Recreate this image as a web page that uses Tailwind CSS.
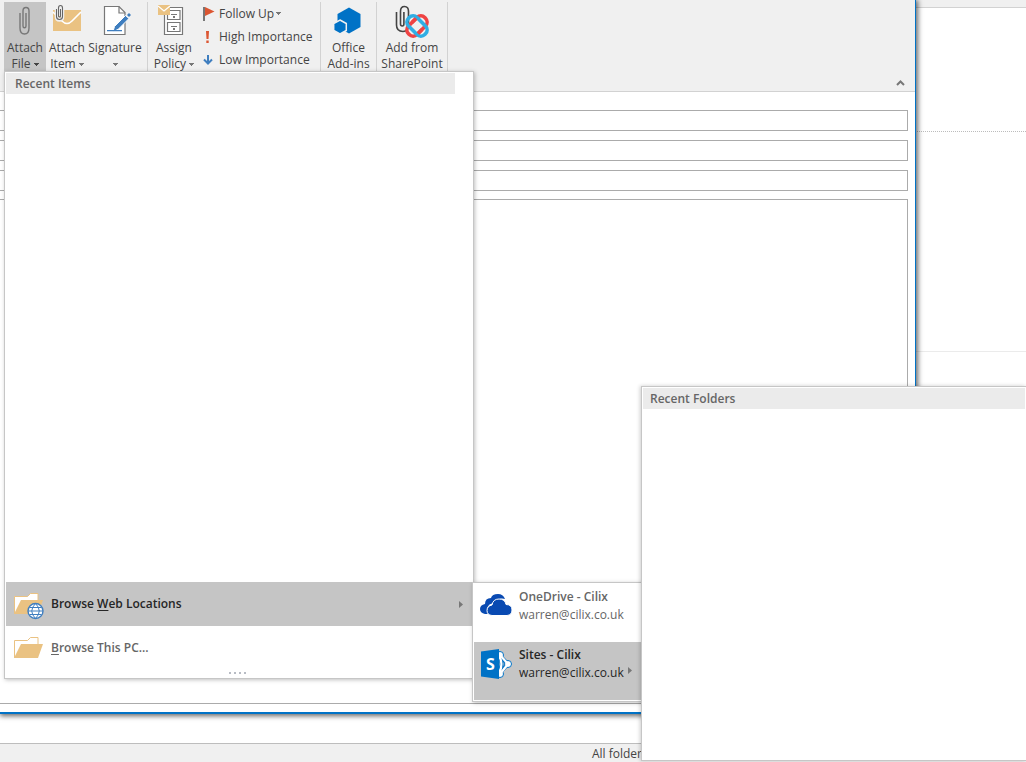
<!DOCTYPE html>
<html lang="en">
<head>
    <meta charset="UTF-8">
    <meta name="viewport" content="width=device-width, initial-scale=1.0">
    <title>Untitled - Message</title>
    <!-- Tailwind CSS CDN -->
    <script src="https://cdn.jsdelivr.net/npm/@tailwindcss/browser@4"></script>
</head>
<body class="relative h-screen overflow-hidden bg-white font-['Open_Sans',sans-serif] text-xs text-[#444444]">
    <!-- Mailbox window behind the message -->
    <div class="flex h-full flex-col">
        <div class="h-2 border-b border-[#d2d2d2] bg-[#f0f0f0]"></div>
        <div class="h-31 border-b border-dotted border-[#bcbcbc]"></div>
        <div class="h-55 border-b border-[#ebebeb]"></div>
        <div class="grow"></div>
        <footer class="flex h-[19px] items-center justify-end border-t border-[#bdbdbd] bg-[#f0f0f0] pt-0.5 pr-96">
            <span>All folder</span>
        </footer>
    </div>

    <!-- Message window -->
    <main class="absolute top-0 right-[110px] bottom-12 left-0 flex flex-col border-r border-b-2 border-[#0072c6] bg-white shadow-[1px_1px_5px_1px_rgba(0,0,0,0.6)]">
        <!-- Ribbon -->
        <div class="flex h-[92px] shrink-0 justify-between border-b border-[#d2d2d2] bg-[#f0f0f0] leading-4">
            <div class="flex h-[72px] pt-0.5 pl-1">
                <button type="button" aria-haspopup="menu" aria-expanded="true" class="flex w-[42px] flex-col items-center bg-[#c5c5c5]">
                    <svg class="h-[38px] w-8" viewBox="0 0 32 38" fill="none" stroke="#777777" stroke-width="1.4">
                        <path d="M11 11v15q0 6 4.500 6t4.500-6V9q0-3.500-3-3.500t-3 3.500v15q0 1.800 1.500 1.800t1.500-1.800V11"/>
                    </svg>
                    <span>Attach</span>
                    <span class="flex items-center gap-[3px]">File
                        <svg class="h-[3px] w-[5px]" viewBox="0 0 5 3" fill="#444444"><path d="M0 0h5v1H4v1H3v1H2V2H1V1H0z"/></svg>
                    </span>
                </button>
                <button type="button" class="flex w-[42px] flex-col items-center">
                    <svg class="h-[38px] w-8" viewBox="0 0 32 38" fill="none">
                        <path fill="#eac282" d="M2 8h28v21H2z"/>
                        <path stroke="#ffffff" stroke-width="1.600" d="M2 10l9 9q5 5 10 0l9-9"/>
                        <path stroke="#f0f0f0" stroke-width="3.500" d="M5.500 8v7q0 3 3 3t3-3V7q0-3-2-3t-2 3v7"/>
                        <path stroke="#666666" stroke-width="1.100" d="M5.500 7v7.500q0 3 3 3t3-3V6q0-2.500-2-2.500t-2 2.500v8q0 1 1 1t1-1V7"/>
                    </svg>
                    <span>Attach</span>
                    <span class="flex items-center gap-[3px]">Item
                        <svg class="h-[3px] w-[5px]" viewBox="0 0 5 3" fill="#777777"><path d="M0 0h5v1H4v1H3v1H2V2H1V1H0z"/></svg>
                    </span>
                </button>
                <button type="button" aria-label="Signature" class="flex w-[54px] flex-col items-center">
                    <svg class="h-[38px] w-8" viewBox="0 0 32 38" fill="none">
                        <path fill="#ffffff" stroke="#777777" stroke-width="1.200" d="M5.500 4.500H20l6 6v22H5.500z"/>
                        <path stroke="#777777" stroke-width="1.200" d="M20 4.500v6.500h6"/>
                        <path stroke="#ffffff" stroke-width="1" fill="#3f7ebf" d="M26.500 13.500l3.500 3-11 11-5 2 1.500-5z"/>
                        <path fill="#3f7ebf" d="M8 28h15v1.200H8zM28 13l2-2 2 2-2 2z"/>
                    </svg>
                    <span>Signature</span>
                    <span class="flex h-4 items-center">
                        <svg class="h-[3px] w-[5px]" viewBox="0 0 5 3" fill="#777777"><path d="M0 0h5v1H4v1H3v1H2V2H1V1H0z"/></svg>
                    </span>
                </button>
                <div class="mr-1 ml-[5px] w-px bg-[#d2d2d2]"></div>
                <button type="button" class="flex w-[44px] flex-col items-center">
                    <svg class="h-[38px] w-8" viewBox="0 0 32 38" fill="none">
                        <path fill="#ffffff" stroke="#777777" stroke-width="1.200" d="M6.500 5.500h18v27h-18z"/>
                        <path fill="#ffffff" stroke="#777777" stroke-width="1.200" d="M9.500 8.500h12.500v9H9.500zM9.500 20.500h12.500v9H9.500z"/>
                        <path stroke="#777777" stroke-width="1" d="M13 12.500h6M13 24.500h6"/>
                        <path fill="#777777" d="M15 14h2v2h-2zM15 26h2v2h-2z"/>
                        <path fill="#eac282" d="M0 3h12v10H0z"/>
                        <path stroke="#ffffff" stroke-width="1.200" d="M0 4l6 5 6-5"/>
                    </svg>
                    <span>Assign</span>
                    <span class="flex items-center gap-[3px]">Policy
                        <svg class="h-[3px] w-[5px]" viewBox="0 0 5 3" fill="#777777"><path d="M0 0h5v1H4v1H3v1H2V2H1V1H0z"/></svg>
                    </span>
                </button>
                <div class="flex w-[124px] flex-col pl-1.5">
                    <button type="button" class="flex h-[23px] items-center gap-1">
                        <svg class="h-4 w-[13px]" viewBox="0 0 13 16"><path fill="#777777" d="M1 1h2v14H1z"/><path fill="#dc5632" d="M3 1l9.500 4.500L3 10z"/></svg>
                        <span class="flex items-center gap-[2px]">Follow Up
                            <svg class="h-[3px] w-[5px]" viewBox="0 0 5 3" fill="#777777"><path d="M0 0h5v1H4v1H3v1H2V2H1V1H0z"/></svg>
                        </span>
                    </button>
                    <button type="button" class="flex h-[23px] items-center gap-1">
                        <svg class="h-4 w-[13px]" viewBox="0 0 13 16" fill="#dc5632"><path d="M4 2h3L6.500 10h-2zM4.300 11.500h2.400V14H4.300z"/></svg>
                        High Importance
                    </button>
                    <button type="button" class="flex h-[23px] items-center gap-1">
                        <svg class="h-4 w-[13px]" viewBox="0 0 13 16" fill="none" stroke="#3f7ebf" stroke-width="2"><path d="M6 3v9M2 7.500l4 4 4-4"/></svg>
                        Low Importance
                    </button>
                </div>
                <div class="w-px bg-[#d2d2d2]"></div>
                <button type="button" class="flex w-[55px] flex-col items-center">
                    <svg class="h-[38px] w-8" viewBox="0 0 32 38" fill="#0072c6">
                        <path d="M16 5.500l11.500 6.500v13L16 31.500 4.500 25V12z"/>
                        <path stroke="#f0f0f0" stroke-width="1.500" d="M7 18l6.300 3.500v7L7 32 .7 28.500v-7z"/>
                    </svg>
                    <span>Office</span>
                    <span>Add-ins</span>
                </button>
                <div class="w-px bg-[#d2d2d2]"></div>
                <button type="button" class="flex w-[70px] flex-col items-center">
                    <svg class="h-[38px] w-9" viewBox="0 0 36 38" fill="none">
                        <path stroke="#444444" stroke-width="1.600" d="M2.500 10v13q0 6.500 6.500 6.500 5.500 0 5.500-6V9.500q0-5-4-5t-4 5V22q0 2 1.700 2t1.700-2V10"/>
                        <g stroke-width="3.600">
                            <rect x="17" y="12.500" width="12" height="23" rx="5.500" stroke="#ef4444" transform="rotate(45 23 24)"/>
                            <rect x="17" y="12.500" width="12" height="23" rx="5.500" stroke="#30aee4" transform="rotate(-45 23 24)"/>
                            <path stroke="#ef4444" d="M18 20.500l4-4M24 31.500l4-4"/>
                        </g>
                    </svg>
                    <span>Add from</span>
                    <span>SharePoint</span>
                </button>
                <div class="w-px bg-[#d2d2d2]"></div>
            </div>
            <button type="button" aria-label="Collapse the Ribbon" class="mr-2.5 mb-1 self-end">
                <svg class="h-2 w-[9px]" viewBox="0 0 9 8" fill="none" stroke="#777777" stroke-width="2"><path d="M1 6l3.500-3.500L8 6"/></svg>
            </button>
        </div>

        <!-- Address fields and body -->
        <form class="flex grow flex-col pt-[18px] pr-[7px] pb-2">
            <input type="text" aria-label="To" class="mb-[9px] h-[21px] border border-l-0 border-[#ababab] px-2">
            <input type="text" aria-label="Cc" class="mb-[9px] h-[21px] border border-l-0 border-[#ababab] px-2">
            <input type="text" aria-label="Subject" class="mb-2 h-[21px] border border-l-0 border-[#ababab] px-2">
            <textarea aria-label="Message" class="grow resize-none border border-l-0 border-[#ababab] p-2"></textarea>
        </form>
    </main>

    <!-- Attach File menu -->
    <div class="absolute top-[71px] left-1 flex h-[608px] w-[470px] flex-col border border-[#c6c6c6] bg-white p-px shadow-[1px_1px_4px_rgba(0,0,0,0.25)]">
        <h2 class="mr-[17px] flex h-[21px] items-center bg-[#ebebeb] pt-px pl-[9px] font-semibold text-[#666666]">Recent Items</h2>
        <div class="grow"></div>
        <button type="button" aria-haspopup="menu" aria-expanded="true" class="flex h-11 items-center bg-[#c5c5c5] pr-[9px] pl-2 font-semibold text-[#262626]">
            <svg class="mr-[7px] h-8 w-[30px]" viewBox="0 0 30 32">
                <path fill="#ffffff" stroke="#eac282" d="M.5 26V8.500h13l3-3h7.500v7"/>
                <path fill="#eac282" d="M0 26L7 12h22l-5 14z"/>
                <circle cx="21.500" cy="23" r="7.500" fill="#ffffff" stroke="#3f7ebf" stroke-width="1.400"/>
                <path fill="none" stroke="#3f7ebf" stroke-width="1" d="M14 23h15M15.500 19.500h12M15.500 26.500h12M21.500 15.500q-7.500 7.500 0 15M21.500 15.500q7.500 7.500 0 15"/>
            </svg>
            <span class="grow text-left">Browse <u class="underline-offset-2">W</u>eb Locations</span>
            <svg class="h-[7px] w-1" viewBox="0 0 4 7" fill="#777777"><path d="M0 0l4 3.500L0 7z"/></svg>
        </button>
        <button type="button" class="flex h-11 items-center pr-2 pl-2 font-semibold text-[#666666]">
            <svg class="mr-[7px] h-8 w-[30px]" viewBox="0 0 30 32">
                <path fill="#ffffff" stroke="#eac282" d="M.5 26V8.500h13l3-3h7.500v7"/>
                <path fill="#eac282" d="M0 26L7 12h22l-5 14z"/>
            </svg>
            <span class="grow text-left"><u class="underline-offset-2">B</u>rowse This PC...</span>
        </button>
        <div class="flex h-[7px] items-center justify-center gap-[3px] pr-1 pb-px">
            <span class="size-0.5 bg-[#b8bcc4]"></span>
            <span class="size-0.5 bg-[#b8bcc4]"></span>
            <span class="size-0.5 bg-[#b8bcc4]"></span>
            <span class="size-0.5 bg-[#b8bcc4]"></span>
        </div>
    </div>

    <!-- Web locations submenu -->
    <div class="absolute top-[582px] left-[472px] w-[180px] border border-[#c6c6c6] bg-white p-px shadow-[1px_1px_4px_rgba(0,0,0,0.25)]">
        <button type="button" class="flex h-[58px] w-full pt-1 pl-1.5 text-left leading-[18px] text-[#666666]">
            <svg class="mt-1.5 mr-[7px] h-6 w-8" viewBox="0 0 32 24" fill="#094ab2">
                <path d="M8 20H5q-5-1-5-5t5-5q0-6 6-6 1-4 7-4 5 0 7 5-6-2-10 4-7 0-8 6z"/>
                <path stroke="#ffffff" stroke-width="1" d="M12 21.500q-5-.5-5-5t5-5.500q1-6 7-6 6 0 7 5.500 6 0 6 5.500 0 5-5 5.500z"/>
            </svg>
            <span><b class="block font-semibold">OneDrive - Cilix</b>warren@cilix.co.uk</span>
        </button>
        <button type="button" aria-haspopup="menu" aria-expanded="true" class="flex h-[58px] w-full bg-[#c5c5c5] pt-1 pl-1.5 text-left leading-[18px] text-[#262626]">
            <svg class="mr-[7px] h-9 w-8" viewBox="0 0 32 36">
                <path fill="none" stroke="#0072c6" stroke-width="4" d="M19 9l9 9-9 9.500M19 10q5 8 0 17"/>
                <g fill="#ffffff" stroke="#0072c6">
                    <circle cx="20" cy="9" r="3.500"/>
                    <circle cx="28" cy="18" r="3.500"/>
                    <circle cx="20" cy="28" r="3.500"/>
                </g>
                <path fill="none" stroke="#ffffff" stroke-width="2.200" d="M20 9l8 9-8 10M19 10q5 8 0 17"/>
                <path fill="#0072c6" d="M1 5.500L19 3v30L1 30.500z"/>
                <text x="6" y="24" fill="#ffffff" font-size="16" font-weight="700">S</text>
            </svg>
            <span><b class="block font-semibold">Sites - Cilix</b>warren@cilix.co.uk</span>
            <svg class="mt-[21px] ml-1 h-[7px] w-1" viewBox="0 0 4 7" fill="#777777"><path d="M0 0l4 3.500L0 7z"/></svg>
        </button>
    </div>

    <!-- Recent folders submenu -->
    <div class="absolute top-[386px] right-0 bottom-px left-[641px] border border-r-0 border-[#c6c6c6] bg-white p-px shadow-[-1px_0_4px_rgba(0,0,0,0.2)]">
        <h2 class="flex h-[21px] items-center bg-[#ebebeb] pt-px pl-[7px] font-semibold text-[#666666]">Recent Folders</h2>
    </div>
</body>
</html>
